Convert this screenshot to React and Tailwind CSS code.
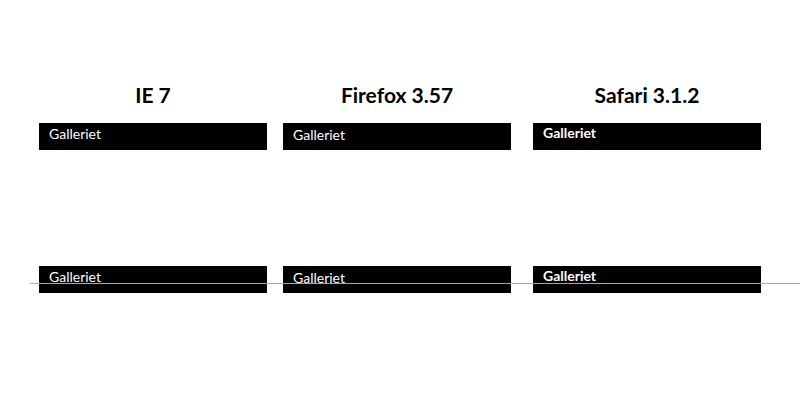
export default function App() {
  const cols = [
    { title: "IE 7", ml: "ml-[39px]", label: "font-normal pt-[2px]" },
    { title: "Firefox 3.57", ml: "ml-[16px]", label: "font-normal pt-[3px]" },
    { title: "Safari 3.1.2", ml: "ml-[22px]", label: "font-bold pt-px" },
  ];
  return (
    <div className="relative w-[800px] h-[400px] bg-white overflow-hidden" style={{ fontFamily: "Lato, 'Open Sans', sans-serif" }}>
      <div className="flex pt-[80px]">
        {cols.map((c) => (
          <div key={c.title} className={`${c.ml} w-[228px] flex flex-col`}>
            <h2 className="h-[43px] text-center text-[21px] font-bold text-black leading-[29px]">{c.title}</h2>
            <div className={`h-[27px] bg-black text-white text-[14px] leading-[17px] pl-[10px] ${c.label}`}>Galleriet</div>
            <div className="h-[116px]" />
            <div className={`h-[27px] bg-black text-white text-[14px] leading-[17px] pl-[10px] ${c.label}`}>Galleriet</div>
          </div>
        ))}
      </div>
      {/* guide line across the lower row */}
      <div className="absolute left-[30px] top-[283px] w-[770px] h-px bg-[#b3b82e]" />
    </div>
  );
}
